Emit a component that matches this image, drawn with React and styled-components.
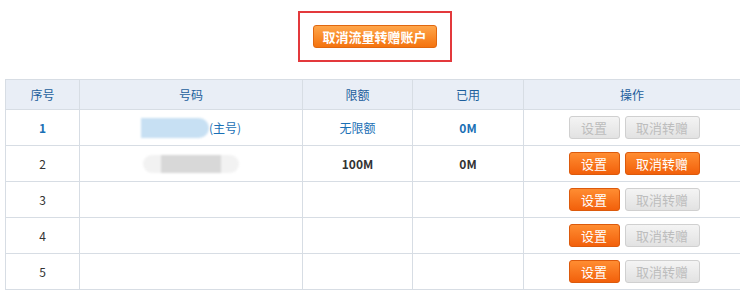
import React from "react";
import styled, { createGlobalStyle } from "styled-components";

const GlobalStyle = createGlobalStyle`
  html, body {
    margin: 0;
    padding: 0;
    background: #fff;
    font-family: "Noto Sans CJK SC", "Liberation Sans", sans-serif;
    font-size: 12px;
    color: #333;
  }
`;

const Page = styled.div`
  width: 735px;
  padding: 11px 0 0 5px;
`;

const TopBar = styled.div`
  display: flex;
  justify-content: center;
  padding-left: 4px;
  margin-bottom: 17px;
`;

const Highlight = styled.div`
  border: 2px solid #e3393c;
  padding: 12px 13px;
`;

const BigButton = styled.button`
  display: block;
  width: 124px;
  height: 23px;
  padding: 0;
  border: 1px solid #e0670f;
  border-radius: 3px;
  background: linear-gradient(#ffa64a, #f4730f);
  color: #fff;
  font-family: inherit;
  font-size: 13px;
  font-weight: bold;
  line-height: 21px;
  cursor: pointer;
`;

const Table = styled.table`
  width: 735px;
  border-collapse: collapse;
  table-layout: fixed;
`;

const Th = styled.th`
  height: 29px;
  padding: 0;
  border: 1px solid #d7dde4;
  background: #e9eef6;
  color: #1c5e9c;
  font-weight: normal;
  font-size: 12px;
  text-align: center;
`;

const Td = styled.td`
  height: 35px;
  padding: 0;
  border: 1px solid #d7dde4;
  text-align: center;
  color: ${(p) => (p.$main ? "#1a70b5" : "#333")};
  font-weight: ${(p) => (p.$bold ? "bold" : "normal")};
`;

const NumberWrap = styled.div`
  display: flex;
  justify-content: center;
  align-items: center;
`;

const BlueMask = styled.span`
  display: inline-block;
  width: 68px;
  height: 20px;
  border-radius: 0 10px 10px 0;
  background: #c7e0f3;
  filter: blur(1px);
`;

const GreyMask = styled.span`
  display: flex;
  justify-content: center;
  width: 96px;
  height: 18px;
  border-radius: 9px;
  background: #f2f2f2;
  filter: blur(1px);
  &::after {
    content: "";
    width: 60px;
    height: 18px;
    background: #d8d8d8;
  }
`;

const Actions = styled.div`
  display: flex;
  justify-content: center;
  gap: 5px;
  padding-left: 4px;
`;

const ActionButton = styled.button`
  height: 23px;
  width: ${(p) => p.$w}px;
  padding: 0;
  border-radius: 3px;
  font-family: inherit;
  font-size: 13px;
  line-height: 21px;
  border: 1px solid ${(p) => (p.disabled ? "#d0d0d0" : "#dc5a0c")};
  background: ${(p) =>
    p.disabled
      ? "linear-gradient(#f4f4f4, #e2e2e2)"
      : "linear-gradient(#ff8d32, #f2600b)"};
  color: ${(p) => (p.disabled ? "#bdbdbd" : "#fff")};
`;

const rows = [
  { id: 1, kind: "main", limit: "无限额", used: "0M", set: false, cancel: false },
  { id: 2, kind: "sub", limit: "100M", used: "0M", set: true, cancel: true },
  { id: 3, set: true, cancel: false },
  { id: 4, set: true, cancel: false },
  { id: 5, set: true, cancel: false },
];

export default function App() {
  return (
    <Page>
      <GlobalStyle />
      <TopBar>
        <Highlight>
          <BigButton>取消流量转赠账户</BigButton>
        </Highlight>
      </TopBar>
      <Table>
        <colgroup>
          <col style={{ width: 74 }} />
          <col style={{ width: 223 }} />
          <col style={{ width: 110 }} />
          <col style={{ width: 111 }} />
          <col style={{ width: 217 }} />
        </colgroup>
        <thead>
          <tr>
            <Th>序号</Th>
            <Th>号码</Th>
            <Th>限额</Th>
            <Th>已用</Th>
            <Th>操作</Th>
          </tr>
        </thead>
        <tbody>
          {rows.map((r) => {
            const main = r.kind === "main";
            return (
              <tr key={r.id}>
                <Td $main={main} $bold={main}>{r.id}</Td>
                <Td $main={main}>
                  {main && (
                    <NumberWrap>
                      <BlueMask />
                      <span>(主号)</span>
                    </NumberWrap>
                  )}
                  {r.kind === "sub" && (
                    <NumberWrap>
                      <GreyMask />
                    </NumberWrap>
                  )}
                </Td>
                <Td $main={main} $bold={r.limit === "100M"}>{r.limit}</Td>
                <Td $main={main} $bold={!!r.used}>{r.used}</Td>
                <Td>
                  <Actions>
                    <ActionButton $w={51} disabled={!r.set}>设置</ActionButton>
                    <ActionButton $w={75} disabled={!r.cancel}>取消转赠</ActionButton>
                  </Actions>
                </Td>
              </tr>
            );
          })}
        </tbody>
      </Table>
    </Page>
  );
}
